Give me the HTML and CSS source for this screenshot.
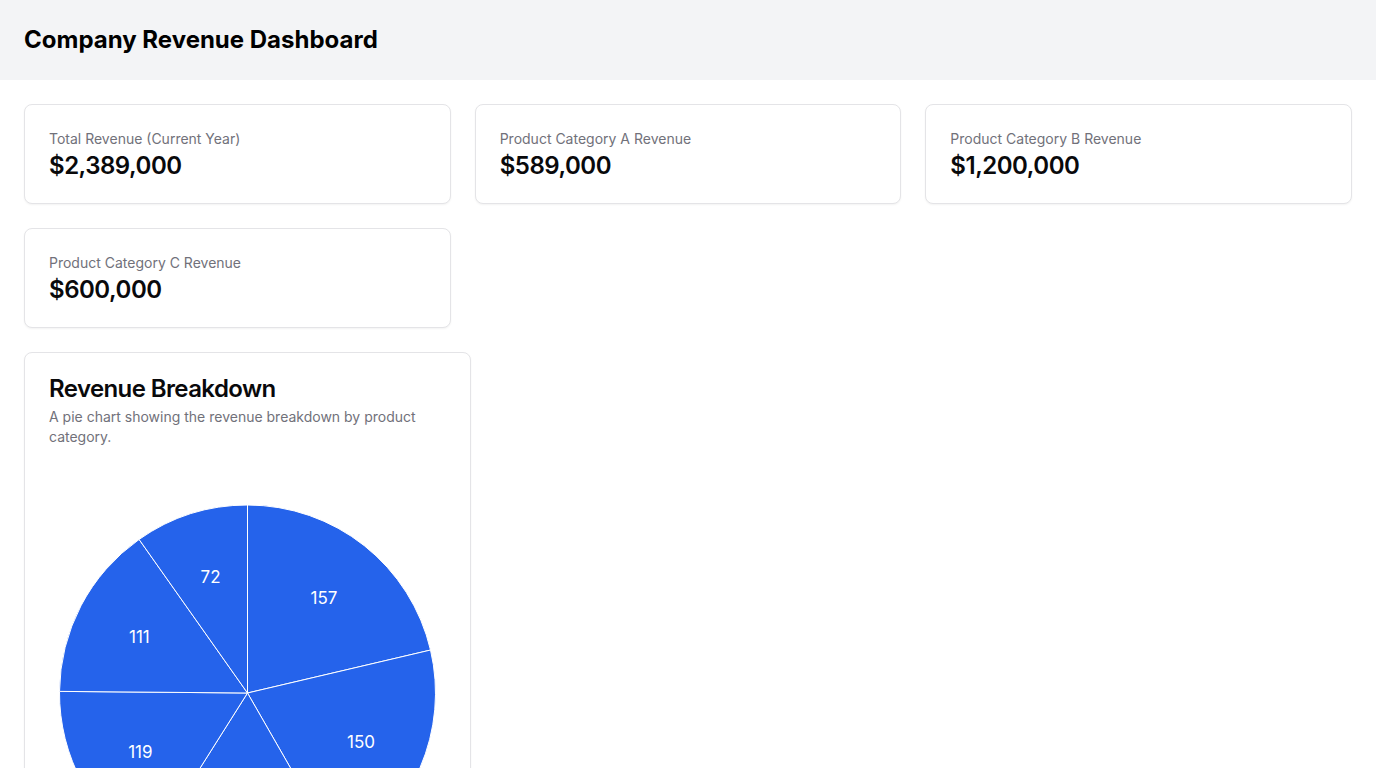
FILE: index.html
```html
<!DOCTYPE html>
<html lang="en">
<head>
<meta charset="utf-8">
<title>Company Revenue Dashboard</title>
<link rel="stylesheet" href="styles.css">
</head>
<body>
<header class="topbar">
  <h1 class="page-title">Company Revenue Dashboard</h1>
</header>
<main class="content">
  <section class="stats">
    <div class="card stat">
      <div class="stat-label">Total Revenue (Current Year)</div>
      <div class="stat-value">$2,389,000</div>
    </div>
    <div class="card stat">
      <div class="stat-label">Product Category A Revenue</div>
      <div class="stat-value">$589,000</div>
    </div>
    <div class="card stat">
      <div class="stat-label">Product Category B Revenue</div>
      <div class="stat-value">$1,200,000</div>
    </div>
    <div class="card stat">
      <div class="stat-label">Product Category C Revenue</div>
      <div class="stat-value">$600,000</div>
    </div>
  </section>
  <section class="card chart-card">
    <div class="chart-header">
      <h2 class="chart-title">Revenue Breakdown</h2>
      <p class="chart-desc">A pie chart showing the revenue breakdown by product category.</p>
    </div>
    <div class="chart-body">
      <svg class="pie" width="397" height="444" viewBox="0 0 397 444">
        <g fill="#2563eb" stroke="#ffffff" stroke-width="1">
          <path d="M198.5 222 L198.5 34 A188 188 0 0 1 381.53 179.04 Z"/>
          <path d="M198.5 222 L381.53 179.04 A188 188 0 0 1 292.04 385.08 Z"/>
          <path d="M198.5 222 L292.04 385.08 A188 188 0 0 1 98.10 380.94 Z"/>
          <path d="M198.5 222 L98.10 380.94 A188 188 0 0 1 10.51 220.39 Z"/>
          <path d="M198.5 222 L10.51 220.39 A188 188 0 0 1 90.08 68.41 Z"/>
          <path d="M198.5 222 L90.08 68.41 A188 188 0 0 1 198.5 34 Z"/>
        </g>
        <g class="pie-labels" fill="#ffffff" text-anchor="middle" dominant-baseline="central">
          <text x="275" y="127">157</text>
          <text x="312" y="271">150</text>
          <text x="195.9" y="344">127</text>
          <text x="91.4" y="281">119</text>
          <text x="90.4" y="165.5">111</text>
          <text x="161.6" y="105.7">72</text>
        </g>
      </svg>
    </div>
  </section>
</main>
</body>
</html>
```

FILE: styles.css
```css
* {
  box-sizing: border-box;
}

html, body {
  margin: 0;
  padding: 0;
  background: #ffffff;
  font-family: Inter, "Noto Sans", "Liberation Sans", sans-serif;
  color: #09090b;
}

.topbar {
  background: #f3f4f6;
  padding: 24px;
  height: 80px;
}

.page-title {
  margin: 0;
  font-size: 24px;
  line-height: 32px;
  font-weight: 700;
  color: #000000;
}

.content {
  padding: 24px;
  display: flex;
  flex-direction: column;
  gap: 24px;
}

.stats {
  display: grid;
  grid-template-columns: repeat(3, 1fr);
  gap: 24px;
}

.card {
  background: #ffffff;
  border: 1px solid #e4e4e7;
  border-radius: 8px;
  box-shadow: 0 1px 2px rgba(0, 0, 0, 0.05);
}

.stat {
  padding: 24px;
  height: 100px;
}

.stat-label {
  font-size: 14px;
  line-height: 20px;
  color: #71717a;
}

.stat-value {
  margin-top: 3px;
  font-size: 24px;
  line-height: 28px;
  font-weight: 600;
  letter-spacing: -0.02em;
  color: #09090b;
}

.chart-card {
  width: 447px;
}

.chart-header {
  padding: 24px;
  display: flex;
  flex-direction: column;
  gap: 6px;
}

.chart-title {
  margin: 0;
  font-size: 24px;
  line-height: 24px;
  font-weight: 600;
  letter-spacing: -0.025em;
}

.chart-desc {
  margin: 0;
  font-size: 14px;
  line-height: 20px;
  color: #71717a;
}

.chart-body {
  padding: 0 24px 24px;
}

.pie {
  display: block;
}

.pie-labels {
  font-family: Inter, "Noto Sans", sans-serif;
  font-size: 17px;
}
```
